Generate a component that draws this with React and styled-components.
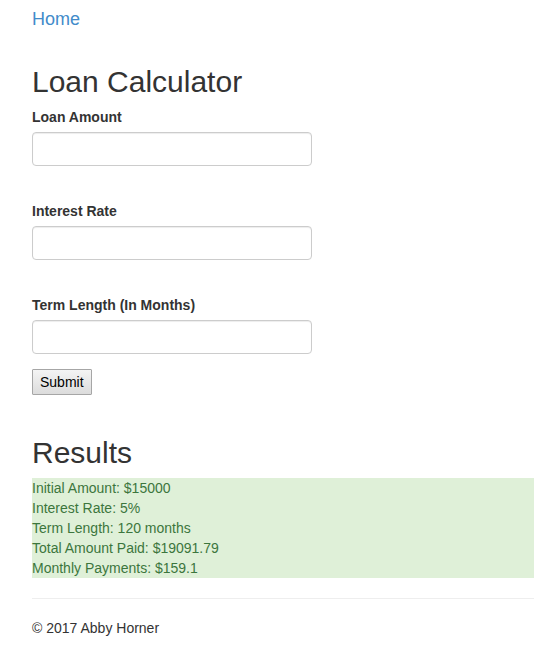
import * as React from 'react';
import styled, { createGlobalStyle } from 'styled-components';

const GlobalStyle = createGlobalStyle`
  html, body {
    margin: 0;
    padding: 0;
    background: #fff;
  }
  body {
    font-family: "Liberation Sans", Arial, Helvetica, sans-serif;
    font-size: 14px;
    line-height: 20px;
    color: #333;
  }
  * {
    box-sizing: border-box;
  }
`;

const Page = styled.div`
  padding-left: 32px;
`;

const Nav = styled.nav`
  padding-top: 9px;
  height: 29px;
`;

const HomeLink = styled.a`
  font-size: 18px;
  line-height: 20px;
  color: #428bca;
  text-decoration: none;
  display: inline-block;
`;

const Heading = styled.h2`
  font-size: 30px;
  line-height: 33px;
  font-weight: 500;
  margin: ${props => props.top}px 0 9px 0;
  color: #333;
`;

const Form = styled.form`
  display: flex;
  flex-direction: column;
  align-items: flex-start;
`;

const Group = styled.div`
  display: flex;
  flex-direction: column;
  align-items: flex-start;
  margin-bottom: ${props => props.gap}px;
`;

const Label = styled.label`
  font-weight: bold;
  font-size: 14px;
  line-height: 20px;
  margin-bottom: 5px;
`;

const Input = styled.input`
  width: 280px;
  height: 34px;
  padding: 6px 12px;
  font: inherit;
  border: 1px solid #ccc;
  border-radius: 4px;
  box-shadow: inset 0 1px 1px rgba(0, 0, 0, 0.075);
  background: #fff;
`;

const Button = styled.button`
  font: inherit;
  font-size: 14px;
  line-height: 20px;
  height: 26px;
  padding: 2px 7px;
  color: #000;
  background: linear-gradient(#f4f4f4, #dcdcdc);
  border: 1px solid #a6a6a6;
  border-radius: 1px;
`;

const Results = styled.div`
  background: #dff0d8;
  color: #3c763d;
`;

const Line = styled.div`
  line-height: 20px;
`;

const Rule = styled.hr`
  margin: 20px 0 19px 0;
  border: 0;
  border-top: 1px solid #eee;
`;

const Footer = styled.footer`
  p {
    margin: 0;
    line-height: 20px;
  }
`;

const fields = [
  { label: 'Loan Amount', gap: 35 },
  { label: 'Interest Rate', gap: 35 },
  { label: 'Term Length (In Months)', gap: 15 },
];

const results = [
  'Initial Amount: $15000',
  'Interest Rate: 5%',
  'Term Length: 120 months',
  'Total Amount Paid: $19091.79',
  'Monthly Payments: $159.1',
];

export default function App () {
  return (
    <Page>
      <GlobalStyle />
      <Nav>
        <HomeLink href="#">Home</HomeLink>
      </Nav>
      <Heading top={36}>Loan Calculator</Heading>
      <Form onSubmit={e => e.preventDefault()}>
        {fields.map(f => (
          <Group key={f.label} gap={f.gap}>
            <Label>{f.label}</Label>
            <Input type="text" />
          </Group>
        ))}
        <Button type="submit">Submit</Button>
      </Form>
      <Heading top={41}>Results</Heading>
      <Results>
        {results.map(r => <Line key={r}>{r}</Line>)}
      </Results>
      <Rule />
      <Footer>
        <p>© 2017 Abby Horner</p>
      </Footer>
    </Page>
  );
}
